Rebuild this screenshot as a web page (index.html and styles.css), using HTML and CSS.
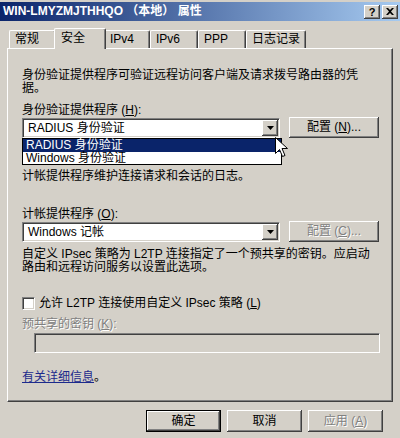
FILE: index.html
```html
<!DOCTYPE html>
<html lang="zh-CN">
<head>
  <meta charset="UTF-8">
  <title>WIN-LMYZMJTHHQO (本地) 属性</title>
  <link rel="stylesheet" href="styles.css">
</head>
<body>
  <div class="window">
    <!-- TITLE BAR -->
    <div class="titlebar">
      <span class="title">WIN-LMYZMJTHHQO （本地） 属性</span>
      <div class="tbtns">
        <span class="tbtn">?</span>
        <span class="tbtn tbtn-x">
          <svg width="8" height="7" viewBox="0 0 8 7"><path d="M0 0h2l2 2 2-2h2L5 3.5 8 7H6L4 5 2 7H0l3-3.5z" fill="#000"/></svg>
        </span>
      </div>
    </div>
    <!-- TABS -->
    <div class="tabs">
      <span class="tab t1">常规</span>
      <span class="tab tab-on t2">安全</span>
      <span class="tab t3">IPv4</span>
      <span class="tab t4">IPv6</span>
      <span class="tab t5">PPP</span>
      <span class="tab t6">日志记录</span>
    </div>
    <!-- PANEL -->
    <div class="panel">
      <p class="txt intro">身份验证提供程序可验证远程访问客户端及请求拨号路由器的凭<br>据。</p>
      <p class="txt lbl1">身份验证提供程序 (<u>H</u>):</p>
      <div class="row">
        <div class="combo">
          <span class="combo-val">RADIUS 身份验证</span>
          <span class="drop"><svg width="7" height="4" viewBox="0 0 7 4"><path d="M0 0h7L3.5 4z" fill="#000"/></svg></span>
        </div>
        <span class="btn cfg">配置 (<u>N</u>)...</span>
      </div>
      <div class="list">
        <div class="opt opt-on">RADIUS 身份验证</div>
        <div class="opt">Windows 身份验证</div>
      </div>
      <svg class="cursor" width="13" height="21" viewBox="0 0 13 21">
        <path d="M0.5 0.5v16l4-4 3 7 2.5-1-3-7h5.5z" fill="#fff" stroke="#000" stroke-width="1"/>
      </svg>
      <p class="txt acct">计帐提供程序维护连接请求和会话的日志。</p>
      <p class="txt lbl2">计帐提供程序 (<u>O</u>):</p>
      <div class="row">
        <div class="combo">
          <span class="combo-val">Windows 记帐</span>
          <span class="drop"><svg width="7" height="4" viewBox="0 0 7 4"><path d="M0 0h7L3.5 4z" fill="#000"/></svg></span>
        </div>
        <span class="btn cfg off">配置 (<u>C</u>)...</span>
      </div>
      <p class="txt note">自定义 IPsec 策略为 L2TP 连接指定了一个预共享的密钥。应启动<br>路由和远程访问服务以设置此选项。</p>
      <div class="check-row">
        <span class="check"></span>
        <span class="txt">允许 L2TP 连接使用自定义 IPsec 策略 (<u>L</u>)</span>
      </div>
      <p class="txt off lbl3">预共享的密钥 (<u>K</u>):</p>
      <div class="field"></div>
      <p class="txt more"><a href="#">有关详细信息</a>。</p>
    </div>
    <!-- FOOTER BUTTONS -->
    <div class="footer">
      <span class="btn btn-def">确定</span>
      <span class="btn">取消</span>
      <span class="btn off">应用 (<u>A</u>)</span>
    </div>
  </div>
</body>
</html>
```

FILE: styles.css
```css
* {
  margin: 0;
  padding: 0;
  box-sizing: border-box;
}
body {
  background: #d4d0c8;
  font-family: "Liberation Sans", "Noto Sans CJK SC", sans-serif;
  font-size: 12px;
  color: #000;
}
.window {
  width: 400px;
  height: 438px;
  position: relative;
  overflow: hidden;
}

/* title bar */
.titlebar {
  margin-top: 2px;
  height: 19px;
  background: linear-gradient(to right, #0a246a, #a6caf0);
  display: flex;
  align-items: center;
  padding-left: 3px;
  padding-right: 2px;
}
.title {
  flex: 1;
  color: #fff;
  font-weight: bold;
  font-size: 12px;
  line-height: 13px;
}
.tbtns {
  display: flex;
  gap: 2px;
}
.tbtn {
  width: 16px;
  height: 14px;
  background: #d4d0c8;
  box-shadow: inset -1px -1px #404040, inset 1px 1px #fff, inset -2px -2px #808080;
  display: flex;
  align-items: center;
  justify-content: center;
  font-weight: bold;
  font-size: 11px;
  line-height: 14px;
}

/* tabs */
.tabs {
  display: flex;
  align-items: flex-end;
  height: 27px;
  padding-left: 9px;
  position: relative;
  z-index: 2;
}
.tab {
  height: 18px;
  border-top: 1px solid #fff;
  border-left: 1px solid #fff;
  border-right: 1px solid #404040;
  box-shadow: inset -1px 0 #808080;
  border-radius: 2px 2px 0 0;
  background: #d4d0c8;
  padding-left: 5px;
  line-height: 17px;
  font-size: 12px;
}
.tab-on {
  height: 21px;
  margin: 0 -2px 0 -2px;
  padding-left: 6px;
  line-height: 19px;
  position: relative;
  top: 1px;
}
.t1 { width: 47px; }
.t2 { width: 52px; }
.t3 { width: 46px; }
.t4 { width: 48px; }
.t5 { width: 48px; }
.t6 { width: 60px; }

/* panel */
.panel {
  margin: 0 7px 0 7px;
  height: 354px;
  border-top: 1px solid #fff;
  border-left: 1px solid #fff;
  border-right: 1px solid #404040;
  border-bottom: 1px solid #404040;
  box-shadow: inset -1px -1px #808080;
  padding: 20px 13px 0 14px;
  position: relative;
}
.txt {
  line-height: 13px;
  white-space: nowrap;
}
.txt u { text-decoration: underline; }
.lbl1 { margin-top: 9px; }
.row {
  display: flex;
  align-items: flex-start;
  height: 21px;
}
.combo {
  width: 258px;
  height: 20px;
  margin-top: 1px;
  background: #fff;
  border-top: 1px solid #808080;
  border-left: 1px solid #808080;
  border-right: 1px solid #fff;
  border-bottom: 1px solid #fff;
  box-shadow: inset 1px 1px #404040, inset -1px -1px #d4d0c8;
  display: flex;
  align-items: center;
  padding: 0 1px 0 5px;
}
.combo-val {
  flex: 1;
  line-height: 13px;
}
.drop {
  width: 16px;
  height: 16px;
  background: #d4d0c8;
  box-shadow: inset -1px -1px #404040, inset 1px 1px #fff, inset -2px -2px #808080;
  display: flex;
  align-items: center;
  justify-content: center;
}
.btn {
  display: flex;
  align-items: center;
  justify-content: center;
  width: 75px;
  height: 22px;
  background: #d4d0c8;
  box-shadow: inset -1px -1px #404040, inset 1px 1px #fff, inset -2px -2px #808080;
  line-height: 13px;
}
.cfg {
  width: 90px;
  height: 21px;
  margin-left: 9px;
}
.off {
  color: #808080;
  text-shadow: 1px 1px #fff;
}

/* dropdown list (open) */
.list {
  position: absolute;
  left: 14px;
  top: 89px;
  width: 260px;
  height: 27px;
  background: #fff;
  border: 1px solid #000;
  z-index: 3;
}
.opt {
  height: 12px;
  line-height: 12px;
  padding-left: 3px;
  white-space: nowrap;
}
.opt-on {
  height: 13px;
  background: #0a246a;
  color: #fff;
}
.cursor {
  position: absolute;
  left: 267px;
  top: 88px;
  z-index: 4;
}

.acct { margin-top: 32px; }
.lbl2 { margin-top: 25px; }
.note { margin-top: 6px; }
.check-row {
  display: flex;
  align-items: center;
  gap: 4px;
  margin-top: 23px;
  height: 13px;
}
.check {
  width: 13px;
  height: 13px;
  background: #fff;
  border-top: 1px solid #808080;
  border-left: 1px solid #808080;
  border-right: 1px solid #fff;
  border-bottom: 1px solid #fff;
  box-shadow: inset 1px 1px #404040, inset -1px -1px #d4d0c8;
}
.lbl3 { margin-top: 8px; }
.field {
  margin: 2px 0 0 12px;
  width: 346px;
  height: 20px;
  border-top: 1px solid #808080;
  border-left: 1px solid #808080;
  border-right: 1px solid #fff;
  border-bottom: 1px solid #fff;
  box-shadow: inset 1px 1px #404040, inset -1px -1px #d4d0c8;
}
.more { margin-top: 18px; }
.more a {
  color: #1c2a8c;
  text-decoration: underline;
}

/* footer */
.footer {
  display: flex;
  justify-content: flex-end;
  gap: 6px;
  padding: 8px 17px 0 0;
}
.btn-def {
  box-shadow: inset 0 0 0 1px #000, inset -2px -2px #404040, inset 2px 2px #fff, inset -3px -3px #808080;
}
```
